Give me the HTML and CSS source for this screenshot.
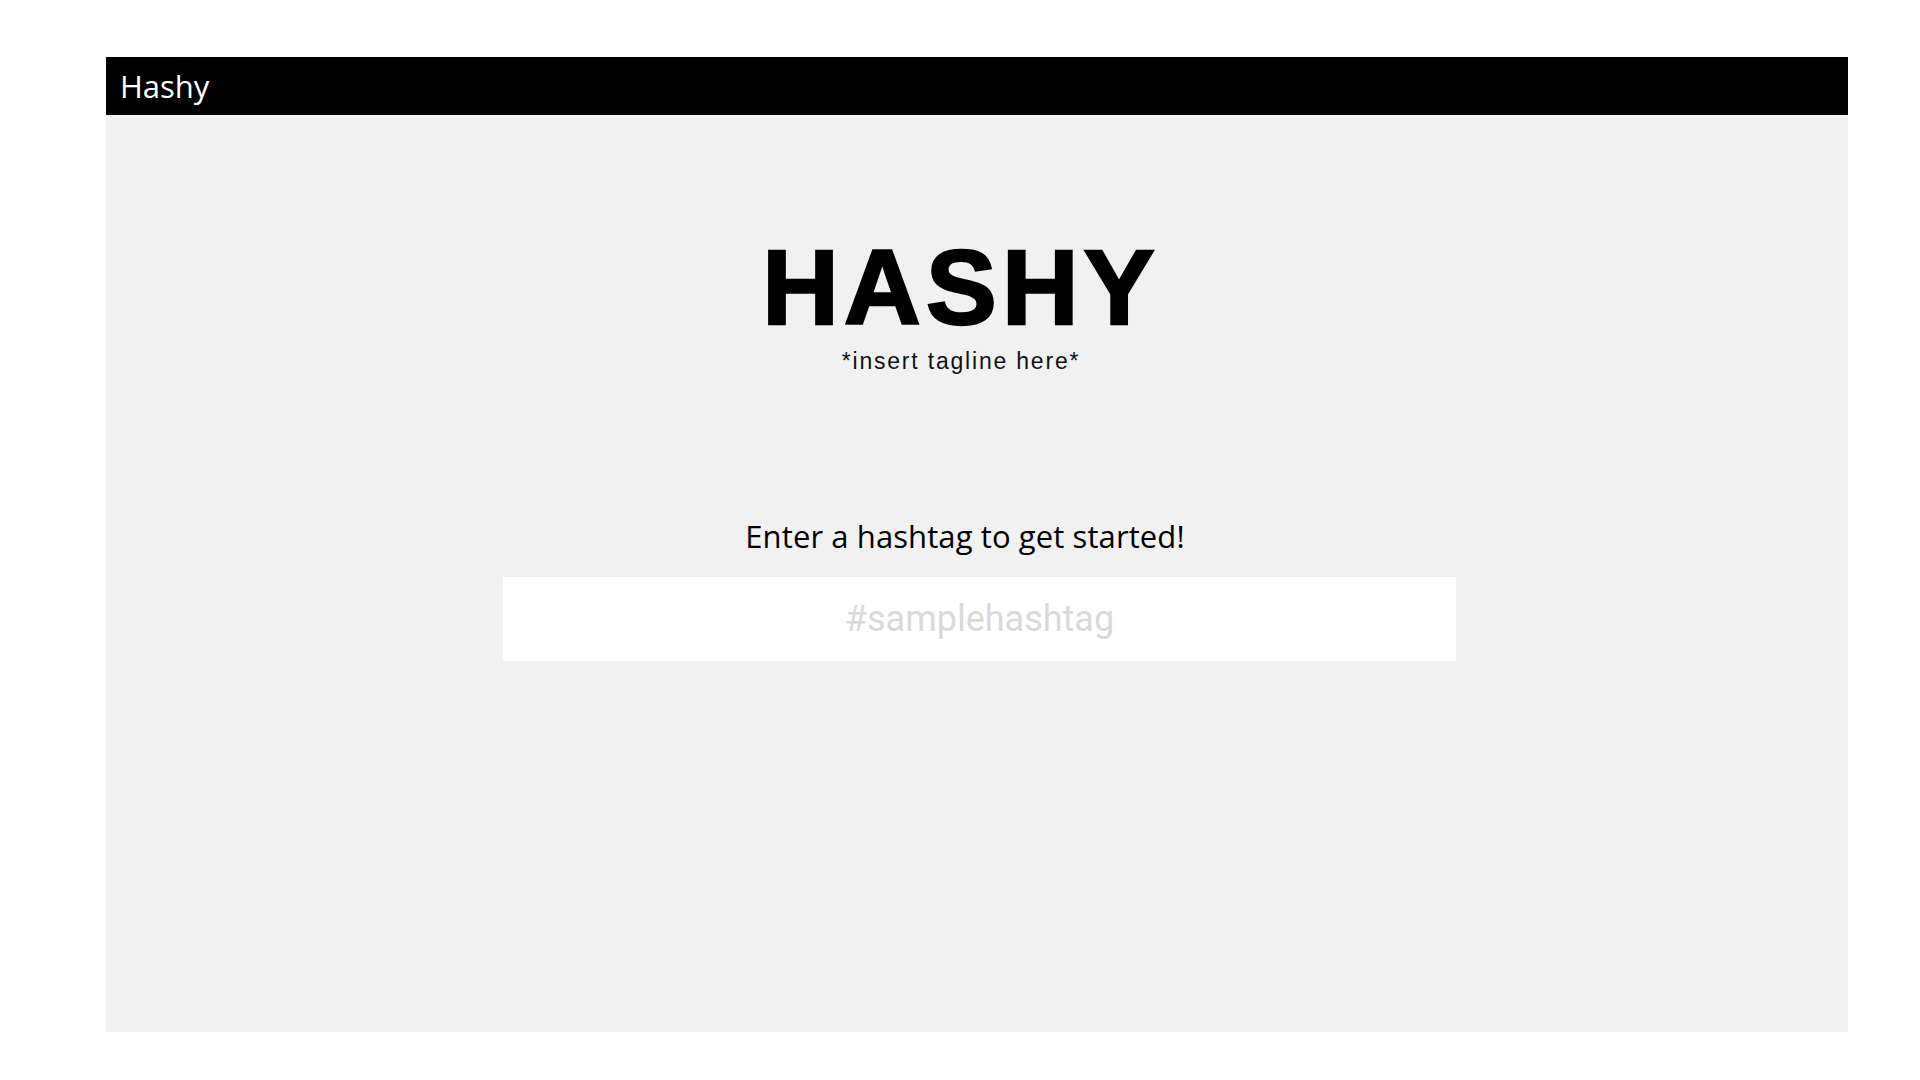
FILE: index.html
```html
<!DOCTYPE html>
<html lang="en">
<head>
<meta charset="utf-8">
<title>Hashy</title>
<link rel="stylesheet" href="styles.css">
</head>
<body>
<div class="frame">
  <header class="topbar"><span class="brand">Hashy</span></header>
  <main class="main">
    <section class="hero">
      <h1 class="title">HASHY</h1>
      <p class="tagline">*insert tagline here*</p>
    </section>
    <section class="search">
      <p class="prompt">Enter a hashtag to get started!</p>
      <input class="hashtag-input" type="text" placeholder="#samplehashtag">
    </section>
  </main>
</div>
</body>
</html>
```
FILE: styles.css
```css
html, body {
  margin: 0;
  padding: 0;
  background: #ffffff;
}
body {
  padding: 57px 72px 0 106px;
  height: 1080px;
  box-sizing: border-box;
}
.frame {
  display: flex;
  flex-direction: column;
  height: 975px;
}
.topbar {
  background: #000000;
  height: 58px;
  flex: 0 0 58px;
  display: flex;
  align-items: center;
  padding-left: 14px;
}
.brand {
  color: #ffffff;
  font-family: "Open Sans", sans-serif;
  font-size: 31px;
  line-height: 1;
}
.main {
  flex: 1;
  background: #f1f1f1;
  display: flex;
  flex-direction: column;
  align-items: center;
  padding-top: 113px;
}
.hero {
  display: flex;
  flex-direction: column;
  align-items: center;
  margin-right: 32px;
}
.title {
  margin: 0;
  font-family: "Liberation Sans", Arial, sans-serif;
  font-weight: 700;
  font-size: 106px;
  line-height: 1.117;
  letter-spacing: 5.3px;
  color: #000000;
  -webkit-text-stroke: 2.5px #000000;
}
.tagline {
  margin: 3px 0 0 0;
  font-family: "Liberation Sans", Arial, sans-serif;
  font-size: 23px;
  line-height: 1.117;
  color: #111111;
  letter-spacing: 1.8px;
}
.search {
  display: flex;
  flex-direction: column;
  align-items: center;
  margin-top: 146px;
}
.prompt {
  margin: 0 24px 0 0;
  font-family: "Open Sans", sans-serif;
  font-size: 31px;
  line-height: 1;
  color: #000000;
  letter-spacing: 0.1px;
}
.hashtag-input {
  margin: 25px 0 0 5px;
  width: 953px;
  height: 84px;
  box-sizing: border-box;
  border: none;
  outline: none;
  background: #ffffff;
  text-align: center;
  font-family: Roboto, sans-serif;
  font-size: 36px;
  color: #333333;
  padding: 0;
}
.hashtag-input::placeholder {
  color: #d9d9d9;
}
```
